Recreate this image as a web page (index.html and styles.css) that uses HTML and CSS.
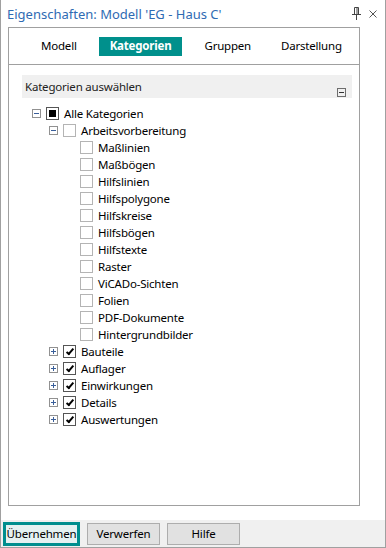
FILE: index.html
```html
<!DOCTYPE html>
<html lang="de">
<head>
    <meta charset="UTF-8">
    <title>Eigenschaften</title>
    <link rel="stylesheet" href="styles.css">
</head>
<body>
<div class="window">
    <div class="titlebar">
        <span class="title">Eigenschaften: Modell 'EG - Haus C'</span>
        <span class="title-icons">
            <svg width="9" height="13" viewBox="0 0 9 13">
                <path d="M2.5 0.5h4v7h-4z M0 7.5h9 M4.5 8v5" fill="none" stroke="#444" stroke-width="1"/>
                <path d="M5 1v6" stroke="#444" stroke-width="1"/>
            </svg>
            <svg width="8" height="8" viewBox="0 0 8 8">
                <path d="M0.5 0.5l7 7 M7.5 0.5l-7 7" stroke="#555" stroke-width="1"/>
            </svg>
        </span>
    </div>

    <div class="main">
        <div class="panel">
            <div class="tabs">
                <span class="tab">Modell</span>
                <span class="tab active">Kategorien</span>
                <span class="tab">Gruppen</span>
                <span class="tab">Darstellung</span>
            </div>

            <div class="tab-content">
                <div class="group-header">
                    <span>Kategorien auswählen</span>
                    <span class="collapse"></span>
                </div>

                <div class="tree">
                    <div class="node l0"><span class="exp minus"></span><span class="chk partial"></span><span class="label">Alle Kategorien</span></div>
                    <div class="node l1"><span class="exp minus"></span><span class="chk"></span><span class="label">Arbeitsvorbereitung</span></div>
                    <div class="node l2"><span class="chk"></span><span class="label">Maßlinien</span></div>
                    <div class="node l2"><span class="chk"></span><span class="label">Maßbögen</span></div>
                    <div class="node l2"><span class="chk"></span><span class="label">Hilfslinien</span></div>
                    <div class="node l2"><span class="chk"></span><span class="label">Hilfspolygone</span></div>
                    <div class="node l2"><span class="chk"></span><span class="label">Hilfskreise</span></div>
                    <div class="node l2"><span class="chk"></span><span class="label">Hilfsbögen</span></div>
                    <div class="node l2"><span class="chk"></span><span class="label">Hilfstexte</span></div>
                    <div class="node l2"><span class="chk"></span><span class="label">Raster</span></div>
                    <div class="node l2"><span class="chk"></span><span class="label">ViCADo-Sichten</span></div>
                    <div class="node l2"><span class="chk"></span><span class="label">Folien</span></div>
                    <div class="node l2"><span class="chk"></span><span class="label">PDF-Dokumente</span></div>
                    <div class="node l2"><span class="chk"></span><span class="label">Hintergrundbilder</span></div>
                    <div class="node l1"><span class="exp plus"></span><span class="chk checked"></span><span class="label">Bauteile</span></div>
                    <div class="node l1"><span class="exp plus"></span><span class="chk checked"></span><span class="label">Auflager</span></div>
                    <div class="node l1"><span class="exp plus"></span><span class="chk checked"></span><span class="label">Einwirkungen</span></div>
                    <div class="node l1"><span class="exp plus"></span><span class="chk checked"></span><span class="label">Details</span></div>
                    <div class="node l1"><span class="exp plus"></span><span class="chk checked"></span><span class="label">Auswertungen</span></div>
                </div>
            </div>
        </div>
    </div>

    <div class="footer">
        <button class="btn primary">Übernehmen</button>
        <button class="btn">Verwerfen</button>
        <button class="btn">Hilfe</button>
    </div>
</div>
</body>
</html>
```

FILE: styles.css
```css
body {
    margin: 0;
    background: #fff;
    font-family: "Noto Sans", "DejaVu Sans", sans-serif;
    font-size: 11.5px;
    letter-spacing: -0.2px;
    color: #000;
}

.window {
    width: 386px;
    height: 548px;
    box-sizing: border-box;
    border: 1px solid #a0a0a0;
    border-top: none;
    display: flex;
    flex-direction: column;
}

.titlebar {
    height: 27px;
    display: flex;
    align-items: center;
    justify-content: space-between;
    padding: 0 8px 0 6px;
}

.title {
    color: #2f6bb3;
    font-size: 13px;
    letter-spacing: 0;
}

.title-icons {
    display: flex;
    align-items: center;
    gap: 8px;
}

.main {
    padding: 0 25px 0 7px;
}

.panel {
    height: 479px;
    box-sizing: border-box;
    border: 1px solid #a0a0a0;
}

.tabs {
    height: 36px;
    border-bottom: 1px solid #a0a0a0;
    display: flex;
    align-items: center;
    padding-left: 24px;
    gap: 14px;
}

.tab {
    padding: 1px 8px 2px;
    line-height: 16px;
}

.tab.active {
    padding: 1px 11px 2px;
    background: #00908c;
    color: #fff;
    font-weight: bold;
}

.tab-content {
    padding: 10px 7px 0 13px;
}

.group-header {
    height: 23px;
    background: #f0f0f0;
    display: flex;
    justify-content: space-between;
    padding-left: 3px;
    padding-right: 6px;
    line-height: 23px;
    color: #222;
}

.collapse {
    width: 7px;
    height: 7px;
    border: 1px solid #6d6d6d;
    margin-top: 13px;
    position: relative;
}

.collapse::after {
    content: "";
    position: absolute;
    left: 1px;
    top: 3px;
    width: 5px;
    height: 1px;
    background: #333;
}

.tree {
    padding-top: 7px;
}

.node {
    height: 17px;
    display: flex;
    align-items: center;
}

.node.l0 { padding-left: 10px; }
.node.l1 { padding-left: 27px; }
.node.l2 { padding-left: 58px; }

.exp {
    width: 7px;
    height: 7px;
    border: 1px solid #919191;
    margin-right: 5px;
    position: relative;
    flex: none;
}

.exp::before {
    content: "";
    position: absolute;
    left: 1px;
    top: 3px;
    width: 5px;
    height: 1px;
    background: #3a5f9a;
}

.exp.plus::after {
    content: "";
    position: absolute;
    left: 3px;
    top: 1px;
    width: 1px;
    height: 5px;
    background: #3a5f9a;
}

.chk {
    width: 11px;
    height: 11px;
    border: 1px solid #b4b4b4;
    background: #fff;
    margin-right: 5px;
    position: relative;
    flex: none;
}

.chk.partial {
    border-color: #555;
}

.chk.partial::after {
    content: "";
    position: absolute;
    left: 2px;
    top: 2px;
    width: 7px;
    height: 7px;
    background: #000;
}

.chk.checked {
    border-color: #555;
}

.chk.checked::after {
    content: "";
    position: absolute;
    left: 4px;
    top: 1px;
    width: 2px;
    height: 6px;
    border-right: 2px solid #000;
    border-bottom: 2px solid #000;
    transform: rotate(40deg);
}

.label {
    white-space: nowrap;
}

.footer {
    margin-top: auto;
    height: 27px;
    background: #f0f0f0;
    display: flex;
    align-items: center;
    padding-left: 2px;
    gap: 7px;
}

.btn {
    font-family: inherit;
    font-size: 11.5px;
    letter-spacing: -0.2px;
    height: 22px;
    width: 73px;
    background: #e1e1e1;
    border: 1px solid #adadad;
    padding: 0;
    color: #000;
}

.btn.primary {
    width: 77px;
    height: 24px;
    border: 3px solid #008e8e;
    background: #e5f1f1;
}
```
